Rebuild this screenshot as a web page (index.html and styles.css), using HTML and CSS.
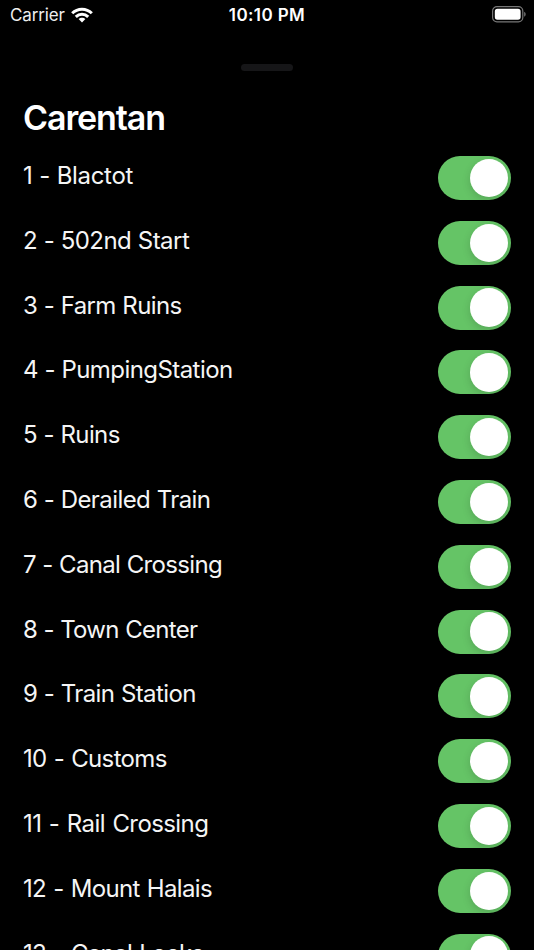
FILE: index.html
```html
<!DOCTYPE html>
<html lang="en">
<head>
<meta charset="utf-8">
<title>Carentan</title>
<link rel="stylesheet" href="styles.css">
</head>
<body>
<div class="screen">
  <header class="status">
    <div class="carrier"><span>Carrier</span>
      <svg class="wifi" width="22" height="16" viewBox="0 0 22 16" fill="none" stroke="#fff" stroke-width="3"><path d="M1.2 6.3C6.7 .8 15.3 .8 20.8 6.3"/><path d="M4.8 9.9C8.4 6.4 13.6 6.4 17.2 9.9"/><path d="M11 15.5L7.6 12.1C9.5 10.3 12.5 10.3 14.4 12.1Z" fill="#fff" stroke="none"/></svg>
    </div>
    <div class="time">10:10 PM</div>
    <svg class="battery" width="34" height="17" viewBox="0 0 34 17"><rect x=".6" y=".6" width="30.2" height="15.3" rx="4.4" fill="none" stroke="#777" stroke-width="1.2"/><rect x="2.8" y="2.8" width="25.8" height="10.9" rx="2.6" fill="#fff"/><path d="M32.2 5.8C34.1 6.6 34.1 10 32.2 10.8Z" fill="#777"/></svg>
  </header>
  <div class="grabber"></div>
  <h1>Carentan</h1>
  <ul class="list">
    <li><span>1 - Blactot</span><i class="toggle"></i></li>
    <li><span>2 - 502nd Start</span><i class="toggle"></i></li>
    <li><span>3 - Farm Ruins</span><i class="toggle"></i></li>
    <li><span>4 - PumpingStation</span><i class="toggle"></i></li>
    <li><span>5 - Ruins</span><i class="toggle"></i></li>
    <li><span>6 - Derailed Train</span><i class="toggle"></i></li>
    <li><span>7 - Canal Crossing</span><i class="toggle"></i></li>
    <li><span>8 - Town Center</span><i class="toggle"></i></li>
    <li><span>9 - Train Station</span><i class="toggle"></i></li>
    <li><span>10 - Customs</span><i class="toggle"></i></li>
    <li><span>11 - Rail Crossing</span><i class="toggle"></i></li>
    <li><span>12 - Mount Halais</span><i class="toggle"></i></li>
    <li><span>13 - Canal Locks</span><i class="toggle"></i></li>
  </ul>
</div>
</body>
</html>
```
FILE: styles.css
```css
* { box-sizing: border-box; }
body { margin: 0; background: #000; color: #fff; font-family: Inter, "Liberation Sans", sans-serif; }
.screen { height: 950px; overflow: hidden; }
.status { display: grid; grid-template-columns: 1fr auto 1fr; align-items: center; height: 30px; padding: 0 8px 0 10px; font-size: 17px; }
.carrier { display: flex; align-items: center; gap: 6px; letter-spacing: -.15px; color: #eee; }
.time { margin: 0 1px 0 -1px; font-weight: 600; letter-spacing: .4px; }
.battery { justify-self: end; margin-top: -2px; }
.grabber { width: 52px; height: 7px; margin: 34px auto 0; border-radius: 4px; background: #161618; }
h1 { margin: 27px 0 0 23px; font-size: 34px; line-height: 40px; font-weight: 600; letter-spacing: -1.1px; }
.list { list-style: none; margin: 18px 0 0; padding: 0 23px; }
.list li { display: flex; justify-content: space-between; height: 64.8px; font-size: 24px; line-height: 39px; letter-spacing: -.58px; word-spacing: .3px; white-space: nowrap; color: #f5f5f5; }
.list li:nth-child(1) { letter-spacing: -.31px; }
.list li:nth-child(2) { letter-spacing: -.53px; }
.list li:nth-child(4) { letter-spacing: -.56px; }
.list li:nth-child(7) { letter-spacing: -.66px; }
.list li:nth-child(8) { letter-spacing: -.7px; }
.list li:nth-child(n+10) { letter-spacing: -.65px; word-spacing: 1px; }
.list li:nth-child(11) { letter-spacing: -.6px; word-spacing: 1.4px; }
.toggle { width: 73px; height: 44px; padding: 2.8px; border-radius: 22px; background: #65c466; display: flex; justify-content: flex-end; }
.toggle::after { content: ""; width: 38.5px; height: 38.5px; border-radius: 50%; background: #fff; box-shadow: 0 3px 8px rgba(0,0,0,.15); }
```
